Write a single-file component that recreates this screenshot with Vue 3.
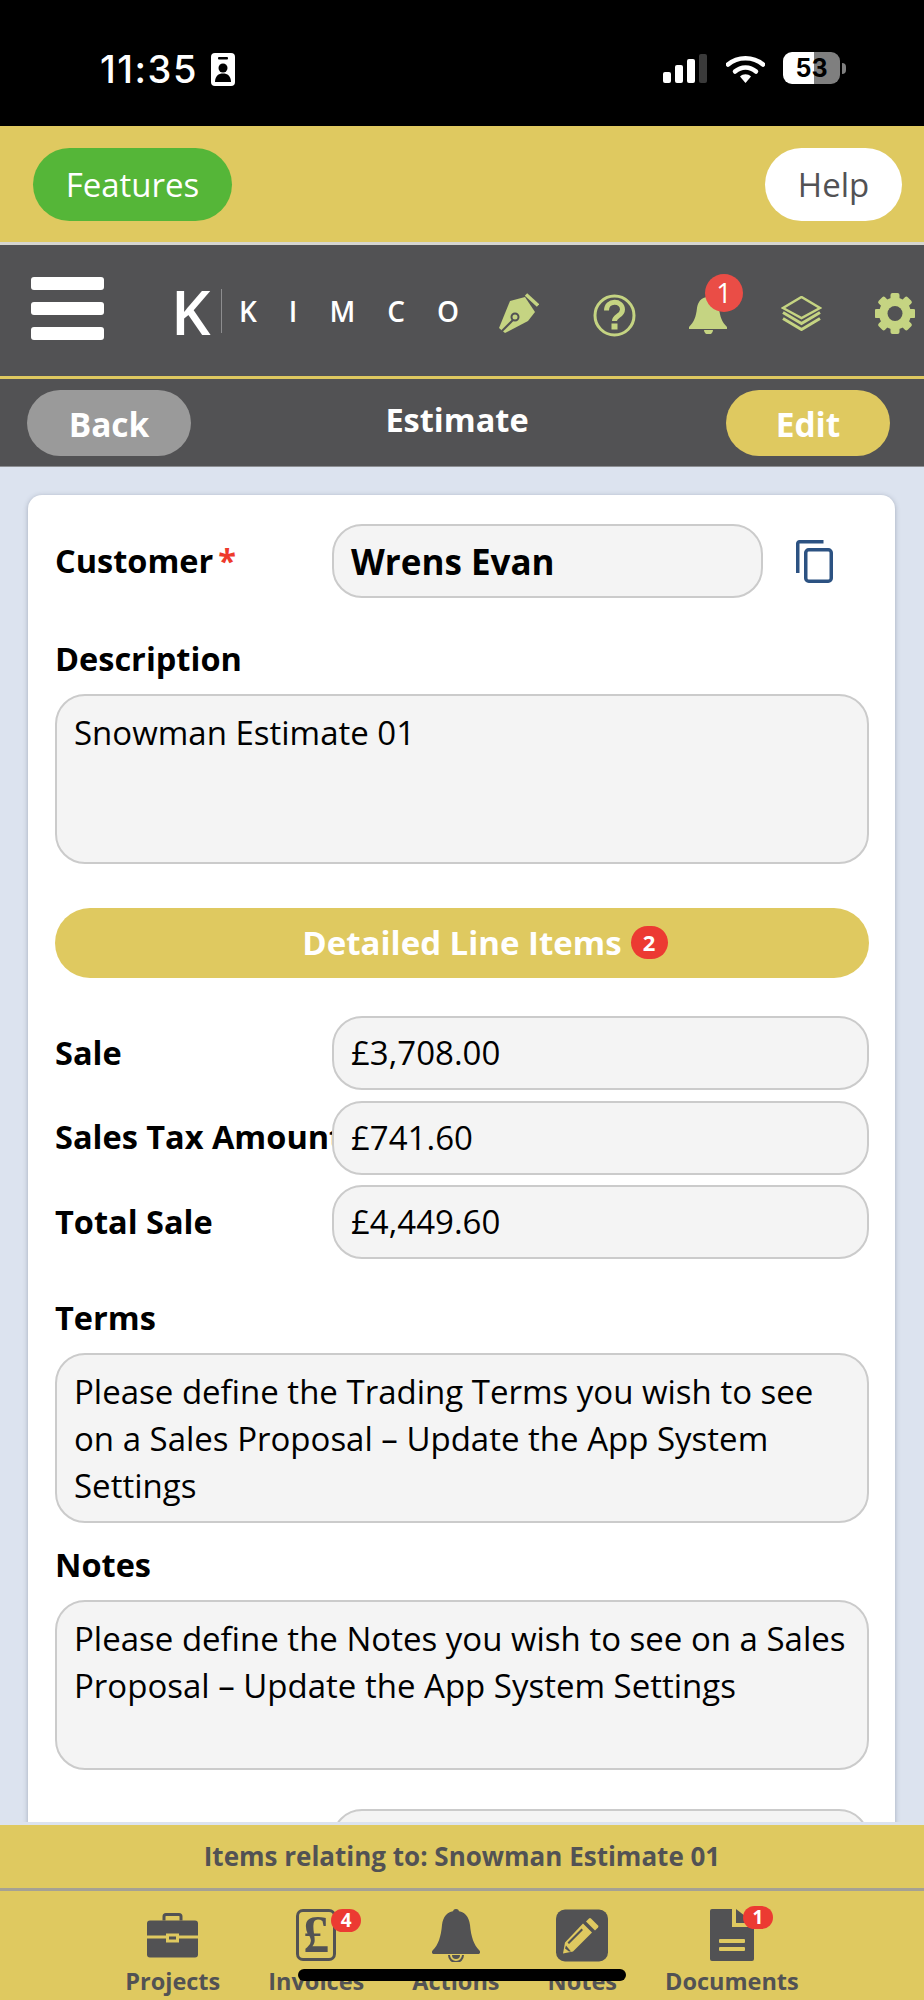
<template>
  <div class="page">
    <div class="status-bar">
      <div class="status-left">
        <span class="time">11:35</span>
        <svg class="contact" viewBox="0 0 24 33">
          <rect width="24" height="33" rx="4" fill="#fff" />
          <rect x="7" y="4" width="10" height="2.500" rx="1" fill="#000" />
          <circle cx="12" cy="15" r="4.500" fill="#000" />
          <path d="M4 29c0-6 3.500-8.500 8-8.500s8 2.500 8 8.500z" fill="#000" />
        </svg>
      </div>
      <div class="status-right">
        <div class="signal">
          <span class="signal-bar s1"></span>
          <span class="signal-bar s2"></span>
          <span class="signal-bar s3"></span>
          <span class="signal-bar s4"></span>
        </div>
        <svg class="wifi" viewBox="0 0 39 29">
          <path d="M2 10.500C11.500 2 27.500 2 37 10.500" fill="none" stroke="#fff" stroke-width="4.500" stroke-linecap="round" />
          <path d="M9 17.500c6-5.500 15-5.500 21 0" fill="none" stroke="#fff" stroke-width="4.500" stroke-linecap="round" />
          <path d="M14 22.500c3-3 8-3 11 0l-5.500 6.500z" fill="#fff" />
        </svg>
        <div class="battery">
          <div class="battery-body"><span>53</span></div>
          <div class="battery-nub"></div>
        </div>
      </div>
    </div>

    <div class="top-bar">
      <button class="pill pill-green">Features</button>
      <button class="pill pill-white">Help</button>
    </div>

    <div class="nav-bar">
      <div class="burger">
        <span></span>
        <span></span>
        <span></span>
      </div>
      <div class="logo">
        <span class="logo-mark">K</span>
        <span class="logo-rule"></span>
        <span class="logo-name">KIMCO</span>
      </div>
      <div class="nav-icons">
        <svg class="nav-icon" width="40" height="40" viewBox="0 0 40 40">
          <path d="M27 1.500l12 11" stroke="#c5d482" stroke-width="3.500" fill="none" />
          <path d="M0 35 11 8 26 4l10 15-7 9-23 12z" fill="#c5d482" />
          <path d="M3 38l11-11" stroke="#525254" stroke-width="2" fill="none" />
          <circle cx="16" cy="24" r="3.500" fill="#c5d482" stroke="#525254" stroke-width="2" />
        </svg>
        <svg class="nav-icon question" width="43" height="43" viewBox="0 0 43 43">
          <circle cx="21.500" cy="21.500" r="19.500" fill="none" stroke="#c5d482" stroke-width="3" />
          <path d="M13.500 16.500c0-11 16-10.500 16-1 0 6.500-8 6-8 11.500" fill="none" stroke="#c5d482" stroke-width="5" />
          <rect x="18.500" y="29.500" width="6" height="6" fill="#c5d482" />
        </svg>
        <div class="bell-wrap">
          <svg width="38" height="38" viewBox="0 0 38 38">
            <path d="M19 1c7 0 10 5 11 11 1 9 3 14 8 19v2H0v-2c5-5 7-10 8-19 1-6 4-11 11-11z" fill="#c5d482" />
            <path d="M15 34a4.500 4.500 0 0 0 9 0z" fill="#c5d482" />
          </svg>
          <span class="nav-badge">1</span>
        </div>
        <svg class="nav-icon" width="41" height="35" viewBox="0 0 41 35">
          <path d="M20.500 1 39 12 20.500 22 2 12z" fill="none" stroke="#c5d482" stroke-width="2.500" />
          <path d="M2 16.500l18.500 11 18.500-11M2 22.500l18.500 11 18.500-11" fill="none" stroke="#c5d482" stroke-width="3" />
        </svg>
        <svg class="nav-icon" width="40" height="41" viewBox="0 0 40 41">
          <g fill="#c5d482">
            <rect
              v-for="angle in gearTeeth"
              :key="angle"
              x="15.500"
              y="0"
              width="9"
              height="41"
              rx="2"
              :transform="`rotate(${angle} 20 20.500)`"
            />
            <circle cx="20" cy="20.500" r="16" />
          </g>
          <circle cx="20" cy="20.500" r="7.500" fill="#525254" />
        </svg>
      </div>
    </div>

    <div class="sub-bar">
      <button class="pill sub-pill pill-grey">Back</button>
      <div class="sub-title">Estimate</div>
      <button class="pill sub-pill pill-yellow">Edit</button>
    </div>

    <div class="content">
      <div class="card">
        <div class="customer-row">
          <div class="label customer-label">Customer<span class="req">*</span></div>
          <div class="field customer-field">Wrens Evan</div>
          <svg class="copy" width="37" height="43" viewBox="0 0 37 43">
            <path d="M1.750 33V3.500a1.750 1.750 0 0 1 1.750-1.750h24" fill="none" stroke="#2c5282" stroke-width="3.500" />
            <rect x="9.750" y="9.750" width="25.500" height="31.500" rx="3" fill="none" stroke="#2c5282" stroke-width="3.500" />
          </svg>
        </div>

        <div class="label description-label">Description</div>
        <div class="area description-area">Snowman Estimate 01</div>

        <button class="line-items">
          <span class="line-text">
            Detailed Line Items
            <span class="line-badge">2</span>
          </span>
        </button>

        <div class="totals">
          <div class="total-row" v-for="row in totals" :key="row.label">
            <div class="label total-label">{{ row.label }}</div>
            <div class="field total-field">{{ row.value }}</div>
          </div>
        </div>

        <div class="label terms-label">Terms</div>
        <div class="area">Please define the Trading Terms you wish to see on a Sales Proposal – Update the App System Settings</div>

        <div class="label notes-label">Notes</div>
        <div class="area">Please define the Notes you wish to see on a Sales Proposal – Update the App System Settings</div>

        <div class="total-row next-row">
          <div class="label total-label"></div>
          <div class="field total-field"></div>
        </div>
      </div>
    </div>

    <div class="footer">
      <div class="footer-title">Items relating to: Snowman Estimate 01</div>
      <div class="tabs">
        <div class="tab">
          <svg width="51" height="44" viewBox="0 0 51 44">
            <path d="M17 7V3a2 2 0 0 1 2-2h13a2 2 0 0 1 2 2v4" fill="none" stroke="#525254" stroke-width="3" />
            <path d="M3 7h45a3 3 0 0 1 3 3v12H32v-2H19v2H0V10a3 3 0 0 1 3-3z" fill="#525254" />
            <path d="M0 25h19v4h13v-4h19v16a3 3 0 0 1-3 3H3a3 3 0 0 1-3-3z" fill="#525254" />
            <rect x="22" y="23" width="7" height="3" fill="#525254" />
          </svg>
          <span>Projects</span>
        </div>
        <div class="tab">
          <div class="tab-icon pound">
            <span class="pound-sign">£</span>
            <span class="tab-badge">4</span>
          </div>
          <span>Invoices</span>
        </div>
        <div class="tab">
          <svg width="48" height="53" viewBox="0 0 48 53">
            <circle cx="24" cy="3" r="3" fill="#525254" />
            <path d="M24 2c9 0 13 6 14 14 1 12 4 20 9 25 2 2 1 4-1 4H2c-2 0-3-2-1-4 5-5 8-13 9-25 1-8 5-14 14-14z" fill="#525254" />
            <path d="M17 46a7 7 0 0 0 14 0" fill="none" stroke="#525254" stroke-width="2" />
            <path d="M20 46a4 4 0 0 0 8 0z" fill="#525254" />
          </svg>
          <span>Actions</span>
        </div>
        <div class="tab">
          <svg width="52" height="52" viewBox="0 0 52 52">
            <rect width="52" height="52" rx="9" fill="#525254" />
            <path d="M35 9l7 7a1.500 1.500 0 0 1 0 2l-3 3-9-9 3-3a1.500 1.500 0 0 1 2 0z" fill="#dfc960" />
            <path d="M27 14l9 9-19 19-10 2 2-11zM25.500 19l-14 14 1.500 1.500 14-14z" fill="#dfc960" fill-rule="evenodd" />
            <path d="M10 36l5 6-2 0-4-3z" fill="#525254" />
          </svg>
          <span>Notes</span>
        </div>
        <div class="tab">
          <div class="tab-icon doc">
            <svg width="44" height="52" viewBox="0 0 44 52">
              <path d="M2 0h20v18h22v32a2 2 0 0 1-2 2H2a2 2 0 0 1-2-2V2a2 2 0 0 1 2-2z" fill="#525254" />
              <path d="M26 0l18 14H26z" fill="#525254" />
              <rect x="9" y="30" width="26" height="4" rx="1" fill="#dfc960" />
              <rect x="9" y="38" width="26" height="4" rx="1" fill="#dfc960" />
            </svg>
            <span class="tab-badge">1</span>
          </div>
          <span>Documents</span>
        </div>
      </div>
      <div class="home-indicator"></div>
    </div>
  </div>
</template>

<script setup>
const gearTeeth = [0, 45, 90, 135];

const totals = [
  { label: "Sale", value: "£3,708.00" },
  { label: "Sales Tax Amount", value: "£741.60" },
  { label: "Total Sale", value: "£4,449.60" },
];
</script>

<style>
html,
body {
  margin: 0;
  background: #dce3ef;
}
</style>

<style scoped>
.page {
  width: 924px;
  height: 2000px;
  display: flex;
  flex-direction: column;
  overflow: hidden;
  background: #dce3ef;
  font-family: "Open Sans", "Noto Sans", sans-serif;
  color: #000;
}

button {
  border: 0;
  padding: 0;
  font-family: inherit;
}

/* phone status bar */
.status-bar {
  height: 126px;
  flex: none;
  background: #000;
  display: flex;
  justify-content: space-between;
  padding: 52px 78px 0 100px;
  box-sizing: border-box;
}

.status-left {
  display: flex;
  align-items: flex-start;
  gap: 13px;
  height: 34px;
}

.time {
  font-family: Inter, sans-serif;
  font-weight: 500;
  font-size: 38px;
  line-height: 34px;
  color: #fff;
  letter-spacing: 1.500px;
}

.contact {
  width: 24px;
  height: 33px;
  margin-top: 1px;
}

.status-right {
  display: flex;
  align-items: flex-start;
  height: 34px;
}

.signal {
  display: flex;
  align-items: flex-end;
  gap: 4px;
  height: 29px;
  margin-top: 2px;
}

.signal-bar {
  width: 8px;
  border-radius: 2px;
  background: #fff;
}

.s1 {
  height: 11px;
}
.s2 {
  height: 18px;
}
.s3 {
  height: 24px;
}
.s4 {
  height: 29px;
  background: #3a3a3a;
}

.wifi {
  width: 39px;
  height: 29px;
  margin: 2px 0 0 19px;
}

.battery {
  display: flex;
  align-items: center;
  margin-left: 18px;
  height: 32px;
}

.battery-body {
  width: 57px;
  height: 32px;
  border-radius: 9px;
  background: linear-gradient(90deg, #fff 54%, #7f7f7f 54%);
  display: flex;
  align-items: center;
  justify-content: center;
  font-family: Inter, sans-serif;
  font-weight: 700;
  font-size: 25px;
  color: #000;
}

.battery-nub {
  width: 4px;
  height: 11px;
  margin-left: 2px;
  border-radius: 0 4px 4px 0;
  background: #7f7f7f;
}

/* yellow strip */
.top-bar {
  height: 116px;
  flex: none;
  background: #dfc960;
  border-bottom: 3px solid #d6d6d0;
  display: flex;
  justify-content: space-between;
  align-items: center;
  padding: 0 22px 0 33px;
}

.pill {
  height: 73px;
  border-radius: 37px;
  font-size: 33px;
  text-align: center;
}

.pill-green {
  width: 199px;
  background: #55b638;
  color: #fff;
}

.pill-white {
  width: 137px;
  background: #fff;
  color: #525254;
}

/* dark nav */
.nav-bar {
  height: 131px;
  flex: none;
  background: #525254;
  border-bottom: 3px solid #dfc960;
  display: flex;
  align-items: center;
  padding: 0 9px 0 31px;
}

.burger {
  width: 73px;
  display: flex;
  flex-direction: column;
  gap: 12px;
  margin-top: -5px;
}

.burger span {
  height: 13px;
  border-radius: 3px;
  background: #fff;
}

.logo {
  display: flex;
  align-items: center;
  margin-left: 67px;
  color: #fff;
}

.logo-mark {
  font-size: 62px;
  font-weight: 600;
  line-height: 44px;
  width: 50px;
}

.logo-rule {
  width: 1px;
  height: 44px;
  background: #8d8d8f;
}

.logo-name {
  font-size: 28px;
  font-weight: 600;
  line-height: 44px;
  letter-spacing: 32px;
  margin-left: 17px;
  width: 240px;
  white-space: nowrap;
}

.nav-icons {
  margin-left: auto;
  display: flex;
  align-items: center;
  gap: 53.5px;
  margin-top: 5px;
}

.nav-icon {
  display: block;
}

.question {
  margin-top: 4px;
}

.bell-wrap {
  position: relative;
  width: 38px;
  height: 38px;
  margin-top: 3px;
}

.bell-wrap svg {
  display: block;
}

.nav-badge {
  position: absolute;
  left: 16px;
  top: -22px;
  width: 38px;
  height: 38px;
  border-radius: 50%;
  background: #ea4d46;
  color: #fff;
  font-size: 27px;
  line-height: 38px;
  text-align: center;
}

/* back / edit row */
.sub-bar {
  height: 87px;
  flex: none;
  background: #525254;
  border-bottom: 1px solid #8c8e92;
  display: flex;
  align-items: center;
  justify-content: space-between;
  padding: 0 34px 0 27px;
}

.sub-pill {
  width: 164px;
  height: 66px;
  border-radius: 33px;
  font-size: 33.5px;
  font-weight: 700;
  color: #fff;
  padding-top: 3px;
}

.pill-grey {
  background: #9a9a9a;
}

.pill-yellow {
  background: #dfc960;
}

.sub-title {
  color: #fff;
  font-size: 32.5px;
  font-weight: 700;
  margin: -7px 0 0 -3px;
}

/* body */
.content {
  flex: 1;
  min-height: 0;
  overflow: hidden;
  padding: 28px 29px 0 28px;
}

.card {
  background: #fff;
  border-radius: 14px;
  box-shadow: 0 1px 5px rgba(90, 100, 120, 0.45);
  padding: 29px 26px 40px 27px;
}

.label {
  font-size: 32.5px;
  font-weight: 700;
  line-height: 40px;
  white-space: nowrap;
}

.req {
  color: #ee3a2c;
  margin-left: 5px;
}

.field {
  box-sizing: border-box;
  height: 74px;
  border: 2px solid #cbcbcb;
  border-radius: 30px;
  background: #f4f4f4;
  padding: 0 17px;
  display: flex;
  align-items: center;
  font-size: 33px;
}

.customer-row {
  display: flex;
  align-items: center;
}

.customer-label {
  width: 277px;
  flex: none;
}

.customer-field {
  width: 431px;
  flex: none;
  font-size: 35px;
  font-weight: 700;
}

.copy {
  margin-left: 33px;
}

.description-label {
  margin-top: 41px;
}

.area {
  box-sizing: border-box;
  height: 170px;
  border: 2px solid #cbcbcb;
  border-radius: 30px;
  background: #f4f4f4;
  padding: 13px 10px 0 17px;
  margin-top: 15px;
  font-size: 33px;
  line-height: 47px;
}

.line-items {
  width: 100%;
  height: 70px;
  margin-top: 44px;
  border-radius: 35px;
  background: #dfc960;
  color: #fff;
  font-size: 33px;
  font-weight: 700;
  display: flex;
  align-items: center;
  justify-content: center;
}

.line-text {
  position: relative;
  margin-top: -2px;
}

.line-badge {
  position: absolute;
  left: 100%;
  top: 50%;
  margin: -16px 0 0 9px;
  width: 37px;
  height: 33px;
  border-radius: 17px;
  background: #ec3a32;
  font-size: 22px;
  line-height: 33px;
}

.totals {
  margin-top: 38px;
  display: flex;
  flex-direction: column;
  gap: 10.5px;
}

.total-row {
  display: flex;
  align-items: center;
}

.total-label {
  width: 277px;
  flex: none;
  line-height: 46px;
  margin-top: -1px;
  overflow: hidden;
}

.total-field {
  flex: 1;
  padding-bottom: 1px;
}

.terms-label {
  margin-top: 39px;
}

.notes-label {
  margin-top: 22px;
}

.next-row {
  margin-top: 39px;
}

/* bottom bar */
.footer {
  flex: none;
  height: 178px;
  box-sizing: border-box;
  background: #dfc960;
  border-top: 3px solid #dce3ef;
  position: relative;
  display: flex;
  flex-direction: column;
}

.footer-title {
  height: 66px;
  box-sizing: border-box;
  border-bottom: 3px solid #a5a193;
  text-align: center;
  font-size: 26px;
  font-weight: 700;
  line-height: 63px;
  color: #525254;
  flex: none;
}

.tabs {
  display: flex;
  justify-content: center;
  gap: 48px;
  padding-top: 18px;
}

.tab {
  display: flex;
  flex-direction: column;
  align-items: center;
  font-size: 23.5px;
  font-weight: 700;
  color: #525254;
  line-height: 32px;
  white-space: nowrap;
}

.tab > svg,
.tab-icon {
  height: 53px;
  flex: none;
  display: block;
  margin-bottom: 3px;
}

.tab-icon {
  position: relative;
}

.pound {
  box-sizing: border-box;
  width: 40px;
  height: 52px;
  margin-bottom: 4px;
  border: 3px solid #525254;
  border-radius: 7px;
  text-align: center;
}

.pound-sign {
  font-family: "Liberation Serif", serif;
  font-weight: 700;
  font-size: 52px;
  line-height: 46px;
  color: #525254;
  display: block;
}

.doc {
  width: 44px;
}

.tab-badge {
  position: absolute;
  top: -3px;
  left: 32px;
  width: 30px;
  height: 23px;
  border-radius: 12px;
  background: #ec3a32;
  color: #fff;
  font-family: "Open Sans", sans-serif;
  font-size: 19px;
  line-height: 23px;
  text-align: center;
}

.doc .tab-badge {
  left: 33px;
}

.home-indicator {
  position: absolute;
  left: 298px;
  top: 144px;
  width: 328px;
  height: 12px;
  border-radius: 6px;
  background: #000;
}
</style>
